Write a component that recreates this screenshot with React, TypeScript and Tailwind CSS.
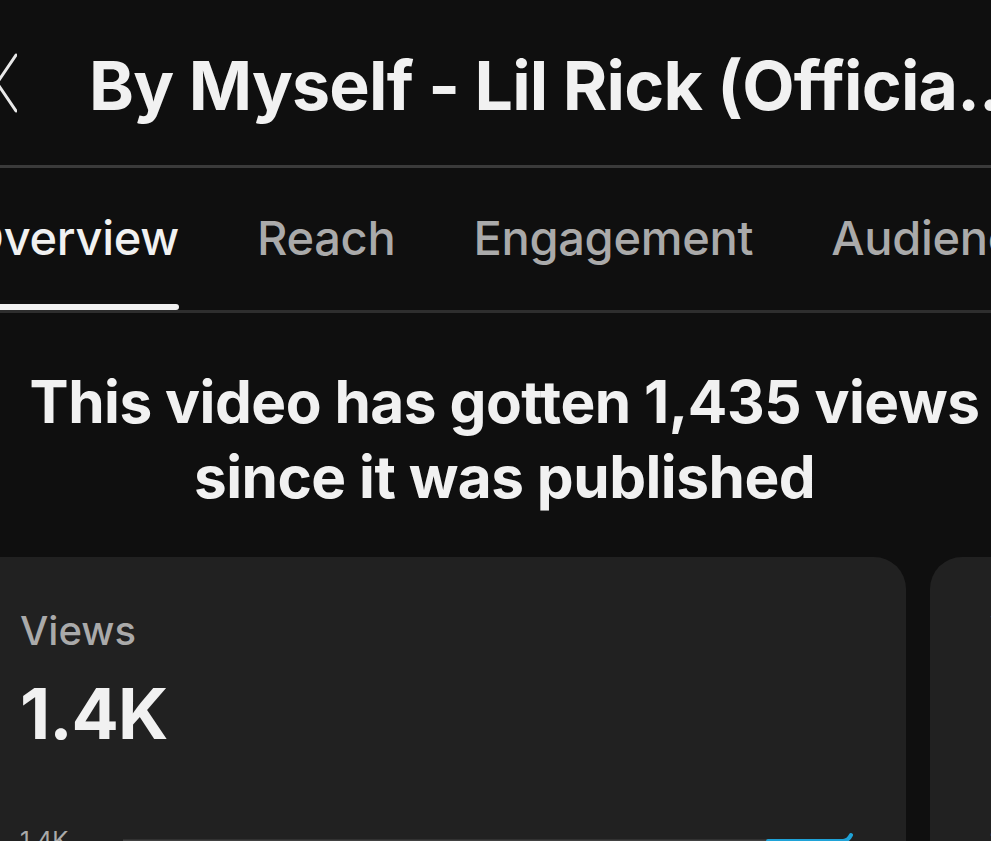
import React from 'react';

const tabs = ['Overview', 'Reach', 'Engagement', 'Audience'];

const App: React.FC = () => {
  return (
    <div
      className="w-[991px] h-[841px] overflow-hidden bg-[#0f0f0f] text-[#f1f1f1]"
      style={{ fontFamily: 'Inter, "Noto Sans", sans-serif' }}
    >
      {/* Header */}
      <div className="h-[165px] flex items-center whitespace-nowrap">
        <svg width="22" height="62" viewBox="0 0 22 62" className="ml-[-5px] mt-[2px] shrink-0">
          <path d="M21 2 L2 30 L21 58" fill="none" stroke="#e8e8e8" strokeWidth="3" strokeLinecap="round" strokeLinejoin="round" />
        </svg>
        <h1 className="ml-[72px] text-[68px] font-bold tracking-[-0.8px] leading-none mt-[4px]">
          By Myself - Lil Rick (Officia...
        </h1>
      </div>
      <div className="h-[3px] bg-[#3a3a3a]" />

      {/* Tabs */}
      <div className="h-[142px] flex items-end gap-[78px] ml-[-32px] whitespace-nowrap">
        {tabs.map((t, i) => (
          <div key={t} className="flex flex-col items-stretch shrink-0">
            <span
              className={`text-[47px] font-medium leading-none tracking-[-0.3px] ${i === 0 ? 'text-[#f1f1f1]' : 'text-[#aaaaaa]'}`}
            >
              {t}
            </span>
            <div className={`mt-[43px] h-[6px] rounded-full ${i === 0 ? 'bg-[#f1f1f1]' : 'bg-transparent'}`} />
          </div>
        ))}
      </div>
      <div className="h-[3px] bg-[#2e2e2e]" />

      {/* Headline */}
      <div className="pt-[51px] pl-[18px] text-center text-[58.5px] font-bold leading-[75px] tracking-[-0.5px]">
        <p>This video has gotten 1,435 views</p>
        <p>since it was published</p>
      </div>

      {/* Cards */}
      <div className="mt-[43px] flex gap-[24px] ml-[-40px]">
        <div className="w-[946px] h-[320px] shrink-0 rounded-[32px] bg-[#212121] pl-[60px] pt-[54px]">
          <div className="text-[40px] font-medium leading-none text-[#aaaaaa]">Views</div>
          <div className="mt-[28px] text-[70px] font-bold leading-none tracking-[-1px]">1.4K</div>
          <div className="mt-[80px] flex items-start">
            <span className="text-[24px] text-[#aaaaaa] leading-none">1.4K</span>
            <svg width="740" height="20" viewBox="0 0 740 20" className="ml-[55px]">
              <line x1="0" y1="12" x2="650" y2="12" stroke="#424242" strokeWidth="3" />
              <path d="M645 12 L720 12 Q725 12 728 6" fill="none" stroke="#1fa3d8" strokeWidth="4" strokeLinecap="round" />
            </svg>
          </div>
        </div>
        <div className="w-[500px] h-[320px] shrink-0 rounded-[32px] bg-[#212121] pl-[60px] pt-[54px]">
          <div className="text-[40px] font-medium leading-none text-[#aaaaaa]">Watch time (hours)</div>
          <div className="mt-[28px] text-[70px] font-bold leading-none">9.8</div>
          <div className="mt-[80px] text-[24px] text-[#aaaaaa] leading-none">10</div>
        </div>
      </div>
    </div>
  );
};

export default App;
